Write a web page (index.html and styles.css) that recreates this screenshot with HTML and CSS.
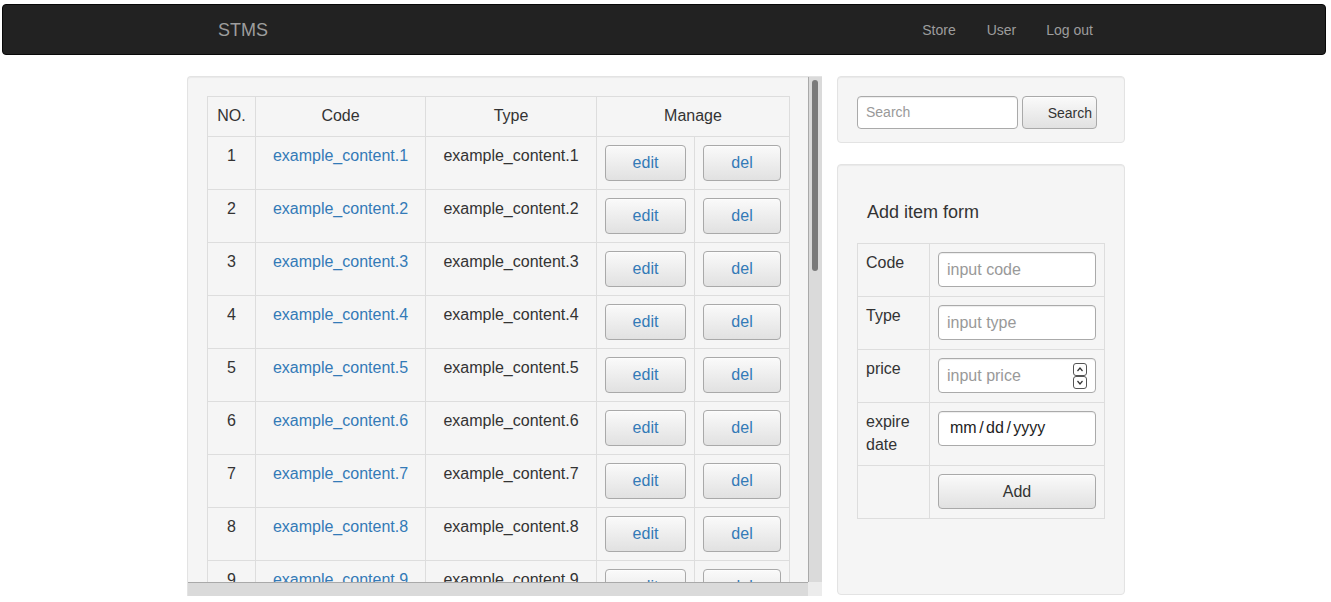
FILE: index.html
```html
<!DOCTYPE html>
<html lang="en">
<head>
<meta charset="utf-8">
<title>STMS</title>
<link rel="stylesheet" href="styles.css">
</head>
<body>
<nav class="navbar">
  <div class="navbar-inner">
    <a class="brand" href="#">STMS</a>
    <ul class="nav">
      <li><a href="#">Store</a></li>
      <li><a href="#">User</a></li>
      <li><a href="#">Log out</a></li>
    </ul>
  </div>
</nav>

<div class="main">
  <div class="well list-well">
    <div class="viewport">
      <table class="grid">
        <colgroup>
          <col class="c-no"><col class="c-code"><col class="c-type"><col class="c-edit"><col class="c-del">
        </colgroup>
        <thead>
          <tr><th>NO.</th><th>Code</th><th>Type</th><th colspan="2">Manage</th></tr>
        </thead>
        <tbody>
          <tr><td>1</td><td><a href="#">example_content.1</a></td><td>example_content.1</td><td><a class="btn" href="#">edit</a></td><td><a class="btn" href="#">del</a></td></tr>
          <tr><td>2</td><td><a href="#">example_content.2</a></td><td>example_content.2</td><td><a class="btn" href="#">edit</a></td><td><a class="btn" href="#">del</a></td></tr>
          <tr><td>3</td><td><a href="#">example_content.3</a></td><td>example_content.3</td><td><a class="btn" href="#">edit</a></td><td><a class="btn" href="#">del</a></td></tr>
          <tr><td>4</td><td><a href="#">example_content.4</a></td><td>example_content.4</td><td><a class="btn" href="#">edit</a></td><td><a class="btn" href="#">del</a></td></tr>
          <tr><td>5</td><td><a href="#">example_content.5</a></td><td>example_content.5</td><td><a class="btn" href="#">edit</a></td><td><a class="btn" href="#">del</a></td></tr>
          <tr><td>6</td><td><a href="#">example_content.6</a></td><td>example_content.6</td><td><a class="btn" href="#">edit</a></td><td><a class="btn" href="#">del</a></td></tr>
          <tr><td>7</td><td><a href="#">example_content.7</a></td><td>example_content.7</td><td><a class="btn" href="#">edit</a></td><td><a class="btn" href="#">del</a></td></tr>
          <tr><td>8</td><td><a href="#">example_content.8</a></td><td>example_content.8</td><td><a class="btn" href="#">edit</a></td><td><a class="btn" href="#">del</a></td></tr>
          <tr><td>9</td><td><a href="#">example_content.9</a></td><td>example_content.9</td><td><a class="btn" href="#">edit</a></td><td><a class="btn" href="#">del</a></td></tr>
        </tbody>
      </table>
    </div>
    <div class="vbar"><div class="vthumb"></div></div>
    <div class="hbar"></div>
    <div class="corner"></div>
  </div>

  <div class="side">
    <div class="well search-well">
      <form class="search-form">
        <input class="search-input" type="text" placeholder="Search">
        <button class="btn search-btn" type="button">Search</button>
      </form>
    </div>

    <div class="well form-well">
      <h4 class="form-title">Add item form</h4>
      <table class="grid form-grid">
        <colgroup><col class="c-label"><col class="c-field"></colgroup>
        <tbody>
          <tr><td>Code</td><td><input class="field" type="text" placeholder="input code"></td></tr>
          <tr><td>Type</td><td><input class="field" type="text" placeholder="input type"></td></tr>
          <tr><td>price</td><td>
            <div class="field field-box">
              <input class="bare" type="text" placeholder="input price">
              <svg class="spinner" width="14" height="26" viewBox="0 0 14 26" aria-hidden="true">
                <rect x="0.5" y="0.5" width="13" height="12" rx="2.5" fill="#fff" stroke="#555"/>
                <rect x="0.5" y="13.5" width="13" height="12" rx="2.5" fill="#fff" stroke="#555"/>
                <path d="M4.5 8 L7 5 L9.5 8" fill="none" stroke="#333" stroke-width="1.2"/>
                <path d="M4.5 18 L7 21 L9.5 18" fill="none" stroke="#333" stroke-width="1.2"/>
              </svg>
            </div>
          </td></tr>
          <tr class="tall-row"><td>expire date</td><td>
            <div class="field field-box date-box"><span>mm</span><span class="sep">/</span><span>dd</span><span class="sep">/</span><span>yyyy</span></div>
          </td></tr>
          <tr><td></td><td><button class="btn add-btn" type="button">Add</button></td></tr>
        </tbody>
      </table>
    </div>
  </div>
</div>
</body>
</html>
```

FILE: styles.css
```css
* { box-sizing: border-box; }

html, body {
  margin: 0;
  padding: 0;
  background: #fff;
}

body {
  font-family: "Liberation Sans", Arial, sans-serif;
  font-size: 14px;
  line-height: 1.42857;
  color: #333;
  overflow: hidden;
}

a { color: #337ab7; text-decoration: none; }

/* navbar */
.navbar {
  margin: 4px 5px 0 2px;
  height: 51px;
  background: #222;
  border: 1px solid #080808;
  border-radius: 4px;
}

.navbar-inner {
  width: 905px;
  margin-left: 200px;
  height: 49px;
  display: flex;
  align-items: center;
  justify-content: space-between;
}

.brand {
  padding: 0 15px;
  font-size: 18px;
  line-height: 20px;
  color: #9d9d9d;
}

.nav {
  list-style: none;
  margin: 0;
  padding: 0;
  display: flex;
}

.nav a {
  display: block;
  padding: 0 15px;
  line-height: 20px;
  color: #9d9d9d;
}

.nav li:first-child a { padding-left: 14px; padding-right: 16px; }

/* layout */
.main {
  display: flex;
  align-items: flex-start;
  gap: 15px;
  margin: 21px 0 0 187px;
}

.side {
  width: 288px;
  display: flex;
  flex-direction: column;
  gap: 21px;
}

.well {
  background: #f5f5f5;
  border: 1px solid #e3e3e3;
  border-radius: 4px;
  box-shadow: inset 0 1px 1px rgba(0, 0, 0, 0.05);
}

.list-well {
  width: 635px;
  height: 520px;
  border-right: 0;
  border-bottom: 0;
  border-radius: 4px 0 0 0;
  overflow: hidden;
  display: grid;
  grid-template-columns: 1fr 14px;
  grid-template-rows: 1fr 14px;
}

.viewport {
  overflow: hidden;
  padding: 19px 19px 0;
  min-height: 0;
}

.vbar {
  background: #dadada;
  border-left: 1px solid #a9a9a9;
  padding: 3px 0 0 3px;
}

.vthumb {
  width: 6px;
  height: 191px;
  background: #7a7a7a;
  border-radius: 3px;
}

.hbar {
  background: #dadada;
  border-top: 1px solid #a9a9a9;
}

.corner {
  background: #ececec;
}

/* tables */
.grid {
  width: 100%;
  border-collapse: collapse;
  table-layout: fixed;
  font-size: 16px;
  line-height: 1.42857;
  margin-bottom: 20px;
}

.grid th,
.grid td {
  border: 1px solid #ddd;
  padding: 8px;
  vertical-align: top;
}

.grid th {
  font-weight: normal;
  text-align: center;
}

.list-well .grid td { text-align: center; white-space: nowrap; }

.c-no { width: 48px; }
.c-code { width: 170px; }
.c-type { width: 171px; }
.c-edit { width: 98px; }
.c-del { width: 95px; }

.btn {
  display: block;
  width: 100%;
  height: 36px;
  padding: 0 12px;
  font-family: "Liberation Sans", Arial, sans-serif;
  font-size: 16px;
  line-height: 34px;
  text-align: center;
  color: #337ab7;
  background: linear-gradient(to bottom, #fafafa 0%, #e1e1e1 100%);
  border: 1px solid #a9a9a9;
  border-radius: 4px;
  box-shadow: inset 0 1px 0 rgba(255, 255, 255, 0.5);
  cursor: pointer;
}

/* search */
.search-well {
  height: 67px;
  padding: 19px;
}

.search-form {
  display: flex;
  gap: 4px;
}

.search-input {
  width: 161px;
  height: 33px;
  padding: 0 8px 1px;
  font-family: "Liberation Sans", Arial, sans-serif;
  font-size: 14px;
  color: #555;
  background: #fff;
  border: 1px solid #aaa;
  border-radius: 4px;
  box-shadow: inset 0 1px 1px rgba(0, 0, 0, 0.075);
}

.search-input::placeholder { color: #999; }

.search-btn {
  width: 75px;
  height: 33px;
  line-height: 30px;
  font-size: 14px;
  padding: 0 4px 0 0;
  text-align: right;
  color: #333;
}

/* add form */
.form-well {
  height: 431px;
  padding: 19px;
}

.form-title {
  margin: 18px 0 21px;
  padding-left: 10px;
  font-size: 18px;
  font-weight: normal;
  line-height: 20px;
  color: #333;
}

.c-label { width: 72px; }

.form-grid td { padding: 8px 8px 9px; }

.form-grid .tall-row td { padding-bottom: 8px; }

.form-grid td:first-child { text-align: left; }

.field {
  display: block;
  width: 100%;
  height: 35px;
  padding: 0 8px;
  font-family: "Liberation Sans", Arial, sans-serif;
  font-size: 16px;
  color: #333;
  background: #fff;
  border: 1px solid #aaa;
  border-radius: 4px;
  box-shadow: inset 0 1px 1px rgba(0, 0, 0, 0.075);
}

.field::placeholder { color: #999; }

.field-box {
  display: flex;
  align-items: center;
}

.bare {
  flex: 1;
  min-width: 0;
  border: 0;
  padding: 0;
  background: transparent;
  font-family: "Liberation Sans", Arial, sans-serif;
  font-size: 16px;
  color: #333;
  outline: none;
}

.bare::placeholder { color: #999; }

.spinner {
  flex: none;
}

.date-box {
  padding-left: 11px;
  color: #222;
}

.sep { margin: 0 2.5px; }

.add-btn {
  height: 35px;
  line-height: 33px;
  color: #333;
}
```
